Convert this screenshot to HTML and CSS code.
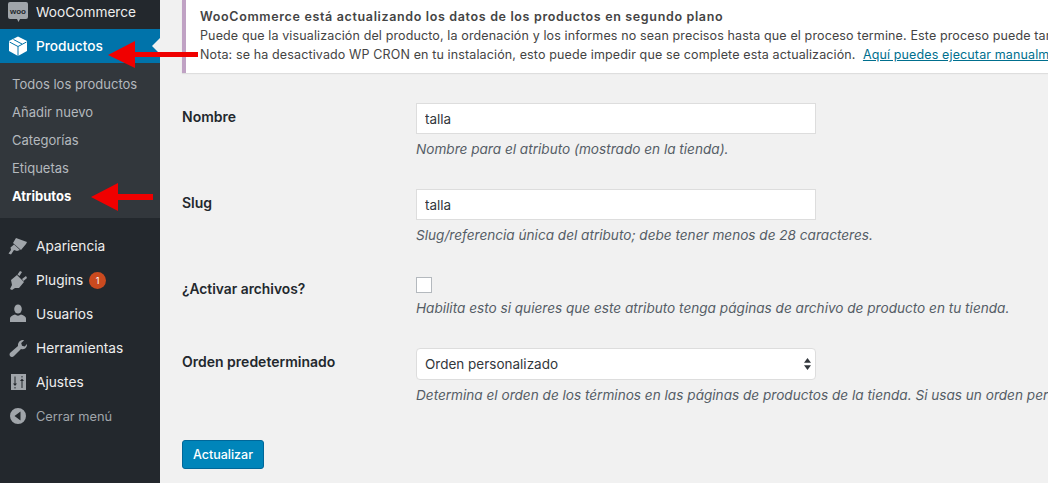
FILE: index.html
```html
<!DOCTYPE html>
<html lang="es">
<head>
<meta charset="utf-8">
<title>Atributos</title>
<link rel="stylesheet" href="styles.css">
</head>
<body>
<div class="page">
  <nav class="sidebar">
    <ul class="menu menu-first">
      <li class="item"><svg class="icon" viewBox="0 0 20 20"><path class="woo" d="M2 0h16a2 2 0 0 1 2 2v13a2 2 0 0 1-2 2h-6l-1.500 3-1.500-3H2a2 2 0 0 1-2-2V2a2 2 0 0 1 2-2z"/><text x="10" y="11.500" class="woo-text">woo</text></svg><span>WooCommerce</span></li>
      <li class="item item-current"><svg class="icon" viewBox="0 0 20 20"><path class="box-w" d="M10 .5 19 5v10l-9 5-9-5V5z"/><path class="box-s" d="M1.500 6 10 10.500 18.500 6M10 10.500V20M5.500 3.500 14 8"/></svg><span>Productos</span></li>
    </ul>
    <ul class="submenu">
      <li class="subitem">Todos los productos</li>
      <li class="subitem">Añadir nuevo</li>
      <li class="subitem">Categorías</li>
      <li class="subitem">Etiquetas</li>
      <li class="subitem subitem-current">Atributos</li>
    </ul>
    <ul class="menu menu-rest">
      <li class="item"><svg class="icon" viewBox="0 0 20 20"><path class="ic" d="M8 2l11 4-1 2-5 6-8-7zM6 8.500l6 5.500-3 1-3-1-3 4.500-2.500-1L3 14l-.5-2.500z"/></svg><span>Apariencia</span></li>
      <li class="item"><svg class="icon" viewBox="0 0 20 20"><path class="ic" d="M3 10l6-5 7 7-5 6h-4l-3 2-2-1 2-4zM9.500 4.500 12 1l2 1-2.500 4zM14 9l4-3 1 2-3.500 3z"/></svg><span>Plugins</span><span class="badge">1</span></li>
      <li class="item"><svg class="icon" viewBox="0 0 20 20"><ellipse class="ic" cx="10" cy="5" rx="3.800" ry="4.500"/><path class="ic" d="M2 18v-3.500c0-2 2-3 5-4 2 1.500 4 1.500 6 0 3 1 5 2 5 4V18z"/></svg><span>Usuarios</span></li>
      <li class="item"><svg class="icon" viewBox="0 0 20 20"><path class="ic" d="M19 6c.3 2.500-1.500 5-4 5.200-.8 0-1.500 0-2-.2L6 18c-1 1.200-2.800 1.300-3.800.3s-.8-2.700.3-3.700l7.500-6.500c-.3-3 1.500-5.500 4.500-6l1.700.1-3 2.800.8 2.800 2.700.6z"/></svg><span>Herramientas</span></li>
      <li class="item"><svg class="icon" viewBox="0 0 20 20"><path class="ic" fill-rule="evenodd" d="M3 2h15v16H3zM6.500 4.500v7H5l2 2.500 2-2.500H7.500v-7zM6.500 15v1.500h1V15zM13.500 16v-7H12l2-2.500L16 9h-1.500v7zM13.500 5.500V4h1v1.500z"/></svg><span>Ajustes</span></li>
      <li class="item item-collapse"><svg class="icon" viewBox="0 0 20 20"><path class="ic" fill-rule="evenodd" d="M10 2a8 8 0 1 1 0 16 8 8 0 0 1 0-16zM12.500 5.500 6.500 10l6 4.500z"/></svg><span>Cerrar menú</span></li>
    </ul>
  </nav>
  <span class="current-notch"></span>

  <main class="content">
    <section class="notice">
      <p class="notice-title">WooCommerce está actualizando los datos de los productos en segundo plano</p>
      <p class="notice-line">Puede que la visualización del producto, la ordenación y los informes no sean precisos hasta que el proceso termine. Este proceso puede tardar un tiempo.</p>
      <p class="notice-line">Nota: se ha desactivado WP CRON en tu instalación, esto puede impedir que se complete esta actualización. &nbsp;<a class="notice-link" href="#">Aquí puedes ejecutar manualmente la herramienta.</a></p>
    </section>

    <form class="form">
      <div class="row row-name">
        <label class="label" for="name">Nombre</label>
        <div class="field">
          <input class="input" id="name" type="text" value="talla">
          <p class="desc">Nombre para el atributo (mostrado en la tienda).</p>
        </div>
      </div>
      <div class="row row-slug">
        <label class="label" for="slug">Slug</label>
        <div class="field">
          <input class="input" id="slug" type="text" value="talla">
          <p class="desc">Slug/referencia única del atributo; debe tener menos de 28 caracteres.</p>
        </div>
      </div>
      <div class="row row-archive">
        <label class="label label-check" for="archive">¿Activar archivos?</label>
        <div class="field">
          <input class="check" id="archive" type="checkbox">
          <p class="desc">Habilita esto si quieres que este atributo tenga páginas de archivo de producto en tu tienda.</p>
        </div>
      </div>
      <div class="row row-order">
        <label class="label" for="order">Orden predeterminado</label>
        <div class="field">
          <div class="select-wrap">
            <select class="select" id="order"><option>Orden personalizado</option></select>
            <svg class="select-arrows" viewBox="0 0 7 12"><path d="M3.500 0 7 4.800H0zM3.500 12 0 7.200h7z"/></svg>
          </div>
          <p class="desc">Determina el orden de los términos en las páginas de productos de la tienda. Si usas un orden personalizado, puedes arrastrar y soltar.</p>
        </div>
      </div>
      <button class="button" type="button">Actualizar</button>
    </form>
  </main>

  <svg class="arrow arrow-top" viewBox="0 0 90 27"><path d="M0 14 27 0v11h63v5H27v11z"/></svg>
  <svg class="arrow arrow-bottom" viewBox="0 0 62 28"><path d="M0 14 27 0v11h35v6H27v11z"/></svg>
</div>
</body>
</html>
```
FILE: styles.css
```css
* { box-sizing: border-box; }
html, body { margin: 0; padding: 0; }
body {
  background: #f1f1f1;
  color: #23282d;
  font-family: Inter, "Liberation Sans", sans-serif;
  font-size: 13px;
  overflow: hidden;
}
p { margin: 0; }
ul { margin: 0; padding: 0; list-style: none; }

.page {
  position: relative;
  display: flex;
  width: 1048px;
  height: 483px;
  overflow: hidden;
}

/* Sidebar */
.sidebar {
  flex: 0 0 160px;
  background: #23282d;
  margin-top: -5px;
  height: 488px;
}
.item {
  display: flex;
  align-items: center;
  height: 34px;
  padding-left: 8px;
  color: #eeeeee;
  font-size: 13.700px;
  font-weight: 400;
}
.icon {
  flex: 0 0 20px;
  width: 20px;
  height: 20px;
  margin-right: 8px;
}
.ic { fill: #a0a5aa; }
.woo { fill: #a0a5aa; }
.woo-text {
  fill: #23282d;
  font-family: "Liberation Sans", sans-serif;
  font-size: 8px;
  font-weight: 700;
  text-anchor: middle;
}
.box-w { fill: #ffffff; }
.box-s { fill: none; stroke: #0073aa; stroke-width: 1; }
.item-current {
  background: #0073aa;
  color: #ffffff;
  font-weight: 500;
}
.current-notch {
  position: absolute;
  left: 152px;
  top: 38px;
  border: 8px solid transparent;
  border-left: 0;
  border-right-color: #f1f1f1;
}
.submenu {
  background: #32373c;
  padding: 7px 0 8px;
}
.subitem {
  display: flex;
  align-items: center;
  height: 28px;
  padding-left: 12px;
  color: #b4b9be;
  font-size: 13px;
}
.subitem-current {
  color: #ffffff;
  font-weight: 700;
}
.menu-rest { margin-top: 11px; }
.badge {
  display: inline-flex;
  align-items: center;
  justify-content: center;
  width: 17px;
  height: 17px;
  margin-left: 6px;
  border-radius: 50%;
  background: #ca4a1f;
  color: #ffffff;
  font-size: 9px;
}
.item-collapse { color: #a0a5aa; font-size: 12.800px; }

/* Content */
.content {
  flex: 1 1 auto;
  min-width: 0;
  padding-left: 22px;
}
.notice {
  width: 1000px;
  height: 73px;
  padding: 7px 0 0 14px;
  background: #ffffff;
  border-left: 4px solid #c0a2c4;
  box-shadow: 0 1px 1px rgba(0, 0, 0, .08);
  color: #444444;
  line-height: 19px;
  white-space: nowrap;
}
.notice-title { font-weight: 600; font-size: 12.500px; letter-spacing: .65px; }
.notice-line { font-size: 12.500px; letter-spacing: .13px; }
.notice-link { color: #006f8e; }

.form { padding-top: 30px; }
.row { display: flex; }
.row-name { margin-bottom: 30px; }
.row-slug { margin-bottom: 32px; }
.row-archive { margin-bottom: 30px; }
.row-order { margin-bottom: 35px; }
.label {
  flex: 0 0 234px;
  padding-top: 5px;
  font-size: 14px;
  font-weight: 600;
  line-height: 18px;
  color: #23282d;
}
.label-check { padding-top: 3px; font-size: 13.800px; }
.field { flex: 0 0 auto; width: 632px; }
.input {
  display: block;
  width: 400px;
  height: 31px;
  padding: 0 8px;
  border: 1px solid #dddddd;
  background: #ffffff;
  color: #32373c;
  font: 400 13.500px Inter, "Liberation Sans", sans-serif;
  outline: 0;
}
.desc {
  margin-top: 6px;
  color: #555d66;
  font-size: 13.600px;
  font-style: italic;
  line-height: 19px;
  white-space: nowrap;
}
.check {
  display: block;
  appearance: none;
  width: 16px;
  height: 16px;
  margin: 0;
  background: #ffffff;
  border: 1px solid #b4b9be;
}
.select-wrap {
  position: relative;
  width: 400px;
  height: 32px;
}
.select {
  display: block;
  appearance: none;
  width: 100%;
  height: 100%;
  padding: 0 8px;
  border: 1px solid #dddddd;
  border-radius: 4px;
  background: #ffffff;
  color: #32373c;
  font: 400 13.500px Inter, "Liberation Sans", sans-serif;
}
.select-arrows {
  position: absolute;
  right: 5px;
  top: 10px;
  width: 7px;
  height: 12px;
  fill: #32373c;
}
.button {
  display: block;
  width: 82px;
  height: 29px;
  padding: 0;
  border: 1px solid #006799;
  border-radius: 3px;
  background: #0085ba;
  color: #ffffff;
  font: 500 12.500px Inter, "Liberation Sans", sans-serif;
}

/* Red annotation arrows */
.arrow {
  position: absolute;
  fill: #f00000;
}
.arrow-top { left: 108px; top: 41px; width: 90px; height: 27px; }
.arrow-bottom { left: 91px; top: 183px; width: 62px; height: 28px; }
```
